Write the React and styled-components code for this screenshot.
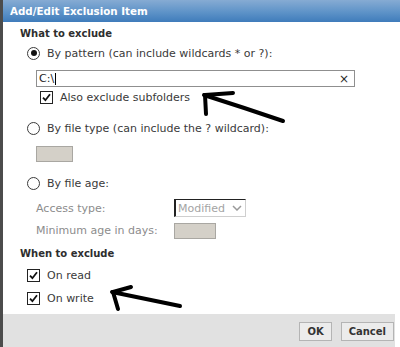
import styled, { createGlobalStyle } from "styled-components";

const GlobalStyle = createGlobalStyle`
  body {
    margin: 0;
    background: #ffffff;
    font-family: "DejaVu Sans", Verdana, sans-serif;
  }
`;

const Frame = styled.div`
  position: relative;
  width: 400px;
  height: 347px;
  box-sizing: border-box;
  border-left: 3px solid #4c4c4c;
  display: flex;
  flex-direction: column;
  background: #ffffff;
  overflow: hidden;
`;

const TitleBar = styled.div`
  height: 22px;
  flex: none;
  display: flex;
  align-items: center;
  padding-left: 7px;
  background: linear-gradient(#86abd3, #5e93c8 55%, #3f7cbb);
  color: #ffffff;
  font-weight: bold;
  font-size: 10.3px;
`;

const Body = styled.div`
  flex: 1;
  display: flex;
  flex-direction: column;
  padding: 5px 0 0 17px;
  font-size: 11px;
  color: #3a3a3a;
`;

const Heading = styled.div`
  height: 14px;
  line-height: 14px;
  font-weight: bold;
  font-size: 10px;
  color: #2e2e2e;
  margin-top: ${({ $top }) => $top || 0}px;
`;

const OptionRow = styled.label`
  display: flex;
  align-items: center;
  gap: 7px;
  height: 14px;
  margin-top: ${({ $top }) => $top || 0}px;
  margin-left: ${({ $indent }) => $indent || 0}px;
  color: ${({ $muted }) => ($muted ? "#8c8c8c" : "#3a3a3a")};
  white-space: nowrap;
`;

const Radio = styled.span`
  width: 11px;
  height: 11px;
  flex: none;
  border: 1px solid #3b3b3b;
  border-radius: 50%;
  background: #fff;
  display: flex;
  align-items: center;
  justify-content: center;

  &::after {
    content: "";
    width: 6px;
    height: 6px;
    border-radius: 50%;
    background: ${({ $checked }) => ($checked ? "#111" : "transparent")};
  }
`;

const Box = styled.span`
  width: 11px;
  height: 11px;
  flex: none;
  border: 1px solid #222;
  background: #fff;
  display: flex;
  align-items: center;
  justify-content: center;
`;

const TextField = styled.div`
  height: 15px;
  margin: 10px 0 0 16px;
  border: 1px solid #8f8f8f;
  display: flex;
  align-items: center;
  justify-content: space-between;
  padding: 0 5px 0 2px;
  box-sizing: content-box;
  width: 310px;
  font-size: 11px;
  color: #222;
`;

const Caret = styled.span`
  display: inline-block;
  width: 1px;
  height: 12px;
  background: #000;
  vertical-align: middle;
  margin-left: 1px;
`;

const Clear = styled.span`
  font-size: 12px;
  color: #2a2a2a;
`;

const GreyField = styled.div`
  width: ${({ $w }) => $w}px;
  height: 16px;
  box-sizing: border-box;
  background: #d4d0c8;
  border: 1px solid #a9a7a2;
  margin-top: ${({ $top }) => $top || 0}px;
  margin-left: ${({ $indent }) => $indent || 0}px;
`;

const FieldRow = styled.div`
  display: grid;
  grid-template-columns: 138px auto;
  align-items: center;
  height: ${({ $h }) => $h}px;
  margin-top: ${({ $top }) => $top || 0}px;
  margin-left: 16px;
  color: #8c8c8c;
`;

const Select = styled.div`
  width: 72px;
  height: 18px;
  box-sizing: border-box;
  border: 1px solid #cfcfcf;
  border-top-color: #222;
  border-left: 2px solid #222;
  display: flex;
  align-items: center;
  justify-content: space-between;
  padding: 0 3px 0 2px;
  font-size: 11px;
  color: #a4a4a4;
  background: #fff;
`;

const Footer = styled.div`
  height: 33px;
  flex: none;
  margin-right: 5px;
  background: #e1e1e1;
  display: flex;
  align-items: center;
  justify-content: flex-end;
  gap: 9px;
  padding-right: 1px;
  padding-top: 2px;
  box-sizing: border-box;
`;

const Button = styled.button`
  height: 19px;
  padding: 0 ${({ $pad }) => $pad}px;
  border: 1px solid #b4b4b4;
  background: #ececec;
  font-family: "DejaVu Sans", Verdana, sans-serif;
  font-weight: bold;
  font-size: 10px;
  color: #333;
  cursor: pointer;
`;

const Overlay = styled.svg`
  position: absolute;
  left: -3px;
  top: 0;
  pointer-events: none;
`;

function Check() {
  return (
    <svg width="9" height="9" viewBox="0 0 9 9">
      <path d="M1 4.6 L3.4 7.2 L8 1.2" fill="none" stroke="#111" strokeWidth="1.8" />
    </svg>
  );
}

function Chevron() {
  return (
    <svg width="10" height="6" viewBox="0 0 10 6">
      <path d="M1 1 L5 5 L9 1" fill="none" stroke="#9a9a9a" strokeWidth="1.5" />
    </svg>
  );
}

export default function App() {
  return (
    <>
      <GlobalStyle />
      <Frame>
        <TitleBar>Add/Edit Exclusion Item</TitleBar>
        <Body>
          <Heading>What to exclude</Heading>

          <OptionRow $top={5} $indent={7}>
            <Radio $checked />
            By pattern (can include wildcards * or ?):
          </OptionRow>
          <TextField>
            <span>
              C:\<Caret />
            </span>
            <Clear>×</Clear>
          </TextField>
          <OptionRow $top={3} $indent={20}>
            <Box>
              <Check />
            </Box>
            Also exclude subfolders
          </OptionRow>

          <OptionRow $top={17} $indent={7}>
            <Radio />
            By file type (can include the ? wildcard):
          </OptionRow>
          <GreyField $w={37} $top={11} $indent={16} />

          <OptionRow $top={14} $indent={7}>
            <Radio />
            By file age:
          </OptionRow>
          <FieldRow $h={18} $top={9}>
            <span>Access type:</span>
            <Select>
              <span>Modified</span>
              <Chevron />
            </Select>
          </FieldRow>
          <FieldRow $h={17} $top={5}>
            <span>Minimum age in days:</span>
            <GreyField $w={42} />
          </FieldRow>

          <Heading $top={8}>When to exclude</Heading>
          <OptionRow $top={7} $indent={7}>
            <Box>
              <Check />
            </Box>
            On read
          </OptionRow>
          <OptionRow $top={9} $indent={7}>
            <Box>
              <Check />
            </Box>
            On write
          </OptionRow>
        </Body>
        <Footer>
          <Button $pad={7}>OK</Button>
          <Button $pad={7}>Cancel</Button>
        </Footer>

        <Overlay width="400" height="347" viewBox="0 0 400 347">
          <g fill="none" stroke="#000" strokeWidth="4" strokeLinecap="round" strokeLinejoin="round">
            <path d="M204 95 Q245 108 283 121" />
            <path d="M233 93 L205 95 L206 114" />
            <path d="M112 292 Q146 299 180 306" />
            <path d="M131 287 L113 292 L118 309" />
          </g>
        </Overlay>
      </Frame>
    </>
  );
}
